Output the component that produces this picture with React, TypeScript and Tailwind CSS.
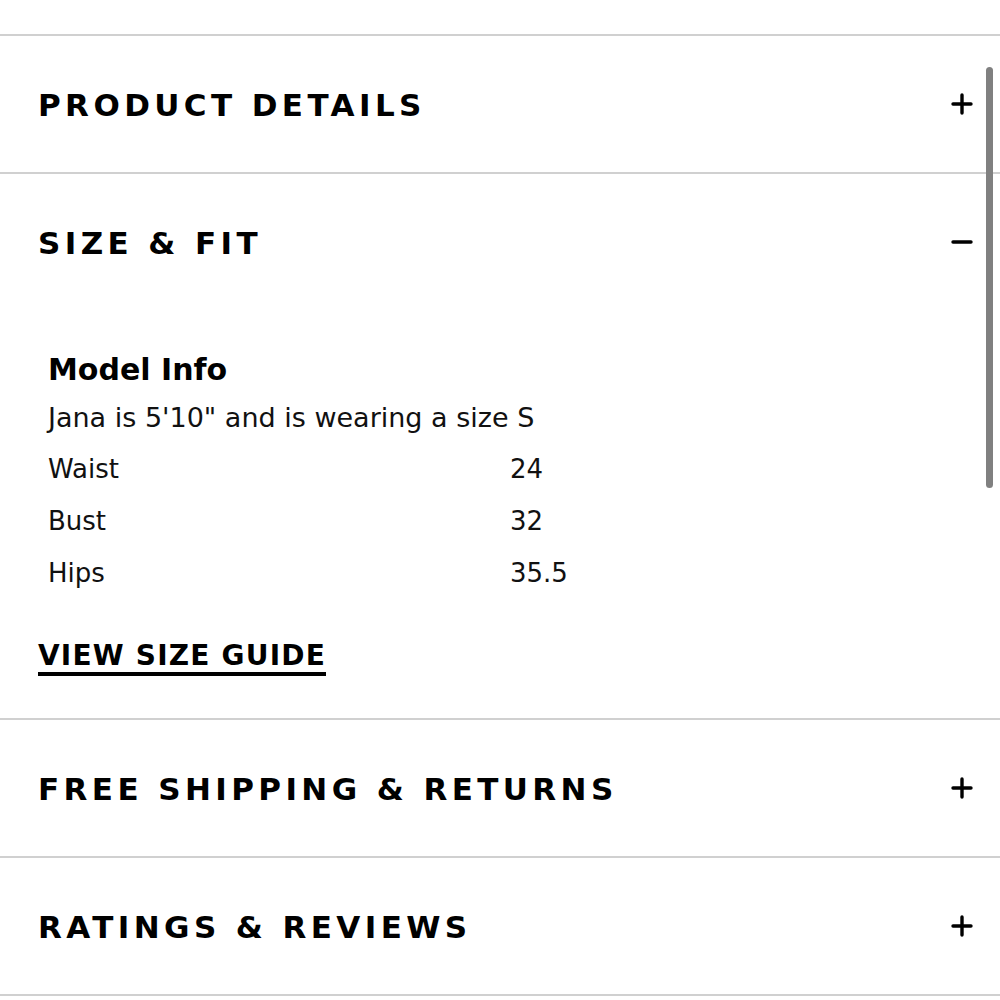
import React from "react";

const headingFont = { fontFamily: '"DejaVu Sans", "Noto Sans", sans-serif' };

function PlusIcon() {
  return (
    <svg width="22" height="22" viewBox="0 0 22 22" className="shrink-0">
      <path d="M11 2v18M2 11h18" stroke="#000" strokeWidth="3.4" strokeLinecap="round" />
    </svg>
  );
}

function MinusIcon() {
  return (
    <svg width="22" height="22" viewBox="0 0 22 22" className="shrink-0">
      <path d="M2 11h18" stroke="#000" strokeWidth="3.4" strokeLinecap="round" />
    </svg>
  );
}

function SectionHeader({ title, open }: { title: string; open?: boolean }) {
  return (
    <div className="flex h-[136px] items-center justify-between pl-[38px] pr-[27px]">
      <h2
        className="pt-[3px] text-[31px] font-semibold uppercase leading-none tracking-[4.4px] text-black"
        style={headingFont}
      >
        {title}
      </h2>
      {open ? <MinusIcon /> : <PlusIcon />}
    </div>
  );
}

const measurements = [
  { label: "Waist", value: "24" },
  { label: "Bust", value: "32" },
  { label: "Hips", value: "35.5" },
];

export default function App() {
  return (
    <div className="relative min-h-[1000px] w-[1000px] overflow-hidden bg-white pt-[34px]">
      <section className="border-t-2 border-[#d0d0d0]">
        <SectionHeader title="Product Details" />
      </section>

      <section className="border-t-2 border-[#d0d0d0]">
        <SectionHeader title="Size & Fit" open />
        <div className="pb-[42px] pl-[38px] pr-[40px] pt-[40px]" style={headingFont}>
          <div className="pl-[10px]">
            <h3 className="text-[30px] font-semibold leading-[40px] text-black">Model Info</h3>
            <p className="mt-[8px] text-[27px] leading-[40px] text-[#111]">
              Jana is 5'10" and is wearing a size S
            </p>
            <div className="mt-[5px] flex flex-col">
              {measurements.map((m) => (
                <div key={m.label} className="flex h-[52px] items-center text-[26px] text-[#111]">
                  <span className="w-[462px]">{m.label}</span>
                  <span>{m.value}</span>
                </div>
              ))}
            </div>
          </div>
          <a
            href="#"
            className="mt-[42px] inline-block border-b-[4px] border-black pb-[1px] text-[28px] font-semibold uppercase leading-[30px] tracking-[1.2px] text-black"
            style={headingFont}
          >
            View Size Guide
          </a>
        </div>
      </section>

      <section className="border-t-2 border-[#d0d0d0]">
        <SectionHeader title="Free Shipping & Returns" />
      </section>

      <section className="border-t-2 border-b-2 border-[#d0d0d0]">
        <SectionHeader title="Ratings & Reviews" />
      </section>

      <div className="absolute left-[986px] top-[67px] h-[421px] w-[7px] rounded-full bg-[#808080]" />
    </div>
  );
}
